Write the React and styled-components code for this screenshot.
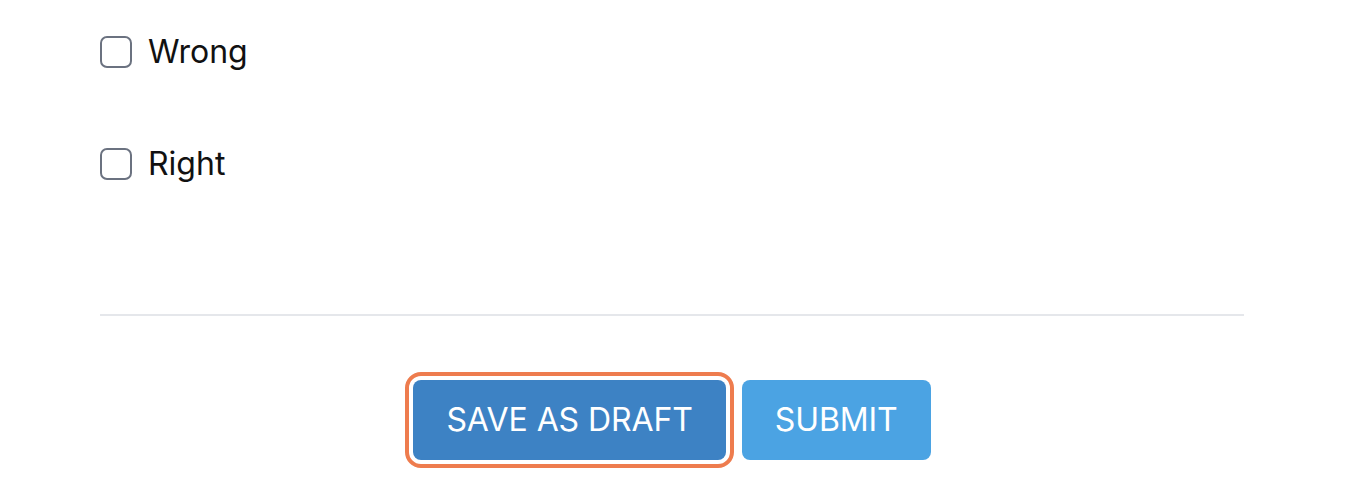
import React from "react";
import styled, { createGlobalStyle } from "styled-components";

const Global = createGlobalStyle`
  html, body { margin: 0; padding: 0; background: #ffffff; }
  body { font-family: Inter, "Noto Sans", sans-serif; }
`;

const Page = styled.div`
  width: 1144px;
  padding: 28px 0 41px 100px;
`;

const Options = styled.div`
  display: flex;
  flex-direction: column;
  gap: 64px;
`;

const Option = styled.label`
  display: flex;
  align-items: center;
  gap: 16px;
  height: 48px;
  font-size: 32px;
  line-height: 48px;
  color: #111111;
`;

const Box = styled.span`
  box-sizing: border-box;
  width: 32px;
  height: 32px;
  border: 2px solid #6b7280;
  border-radius: 7px;
  background: #fff;
  flex: none;
`;

const Divider = styled.hr`
  margin: 126px 0 0 0;
  border: none;
  height: 2px;
  background: #e5e7eb;
`;

const Actions = styled.div`
  display: flex;
  justify-content: center;
  gap: 16px;
  margin-top: 64px;
`;

const Button = styled.button`
  font-family: Inter, "Noto Sans", sans-serif;
  font-size: 32px;
  line-height: 48px;
  padding: 16px 33px 16px 33px;
  height: 80px;
  border: none;
  border-radius: 8px;
  color: #ffffff;
  text-transform: uppercase;
  letter-spacing: -0.1px;
  background: ${(p) => (p.$primary ? "#3d82c4" : "#4ba3e3")};
  outline: ${(p) => (p.$focused ? "4px solid #ee7c4e" : "none")};
  outline-offset: 4px;
`;

export default function App() {
  return (
    <>
      <Global />
      <Page>
        <Options>
          <Option>
            <Box />
            Wrong
          </Option>
          <Option>
            <Box />
            Right
          </Option>
        </Options>
        <Divider />
        <Actions>
          <Button $primary $focused>Save as Draft</Button>
          <Button>Submit</Button>
        </Actions>
      </Page>
    </>
  );
}
